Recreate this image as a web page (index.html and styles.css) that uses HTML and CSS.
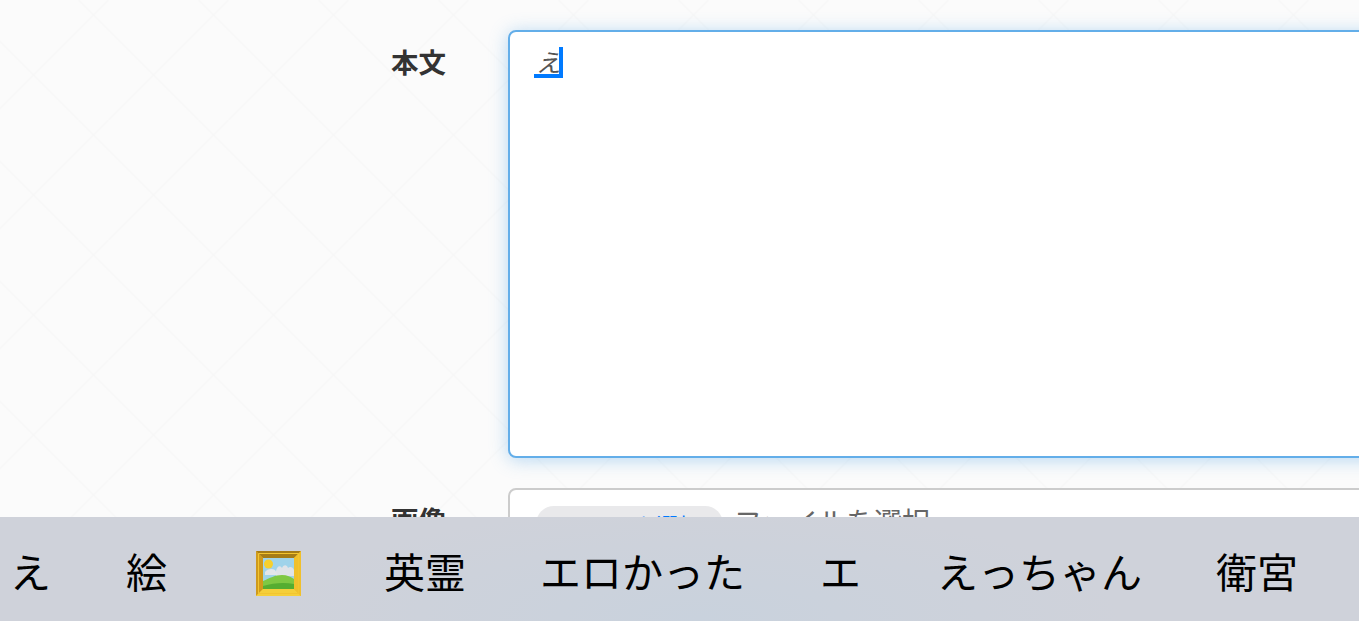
FILE: index.html
```html
<!DOCTYPE html>
<html lang="ja">
<head>
    <meta charset="UTF-8">
    <title>投稿</title>
    <link rel="stylesheet" href="styles.css">
</head>
<body>
    <main class="form">
        <div class="row">
            <label class="label" for="body">本文</label>
            <div class="text-box" id="body">
                <span class="composing">え</span>
            </div>
        </div>
        <div class="row row-file">
            <label class="label">画像</label>
            <div class="file-box">
                <span class="file-button">ファイルを選択</span>
                <span class="file-name">ファイルを選択</span>
            </div>
        </div>
    </main>

    <div class="keyboard">
        <span class="word">え</span>
        <span class="word">絵</span>
        <span class="word word-emoji">
            <svg class="emoji" viewBox="0 0 45 45" width="45" height="45" role="img" aria-label="額縁">
                <rect width="45" height="45" fill="#e3ad20"/>
                <path d="M0 0H45L38 7H7Z" fill="#a67c16"/>
                <path d="M0 0L7 7V38L0 45Z" fill="#cf9a1c"/>
                <path d="M45 0L38 7V38L45 45Z" fill="#f0c02c"/>
                <path d="M0 45L7 38H38L45 45Z" fill="#f5cf3a"/>
                <rect x="7" y="7" width="31" height="31" fill="#9fd3ea"/>
                <path d="M20 20c1-5 4-6 6-3 2-4 5-3 6 0 2-2 5-1 6 2v6H20Z" fill="#dfe3e8"/>
                <path d="M9 21c2-3 7-4 10-2l3 5H9Z" fill="#e3e6ea"/>
                <circle cx="12.500" cy="13" r="4.500" fill="#f7d02c"/>
                <path d="M7 30c7-3 12-6 19-6 5 0 9 2 12 4v10H7Z" fill="#7fc843"/>
                <path d="M7 35c10-3 21-4 31-2v5H7Z" fill="#55ad31"/>
                <path d="M2.500 2.500H42.500V42.500H2.500Z" fill="none" stroke="#f3c530" stroke-width="1"/>
            </svg>
        </span>
        <span class="word word-nudge">英霊</span>
        <span class="word">エロかった</span>
        <span class="word">エ</span>
        <span class="word word-nudge">えっちゃん</span>
        <span class="word">衛宮</span>
    </div>
</body>
</html>
```

FILE: styles.css
```css
html, body {
    height: 100%;
}
body {
    margin: 0;
    display: flex;
    flex-direction: column;
    overflow: hidden;
    font-family: "Noto Sans CJK JP", "Noto Sans", sans-serif;
    color: #333;
    background-color: #fbfbfb;
    /* faint diamond pattern */
    background-image:
        linear-gradient(45deg, transparent calc(50% - 1px), #f6f6f6 50%, transparent calc(50% + 1px)),
        linear-gradient(-45deg, transparent calc(50% - 1px), #f6f6f6 50%, transparent calc(50% + 1px));
    background-size: 120px 120px;
    background-position: -41.5px 0, -11.5px 0;
}
.form {
    flex: 1;
    min-height: 0;
    overflow: hidden;
    padding-top: 30px;
}
.row {
    display: flex;
    width: 1500px;
}
.row-file {
    margin-top: 30px;
}
.label {
    width: 446px;
    margin-right: 62px;
    flex-shrink: 0;
    padding-top: 11px;
    text-align: right;
    font-size: 27.5px;
    font-weight: 700;
    line-height: 40px;
}
.text-box {
    flex: 1;
    box-sizing: border-box;
    height: 428px;
    padding: 15px 24px;
    background-color: #fff;
    border: 2px solid #63aee9;
    border-radius: 8px;
    box-shadow: 0 2px 18px rgba(99, 174, 233, 0.45);
}
.composing {
    display: inline-block;
    box-sizing: border-box;
    width: 29px;
    height: 31px;
    padding-left: 2px;
    border-right: 4px solid #007aff;
    border-bottom: 4px solid #007aff;
    color: #555;
    font-size: 25px;
    font-style: italic;
    line-height: 28px;
}
.file-box {
    flex: 1;
    box-sizing: border-box;
    display: flex;
    gap: 11px;
    height: 120px;
    padding: 16px 26px;
    background-color: #fff;
    border: 2px solid #ccc;
    border-radius: 8px;
}
.file-button {
    box-sizing: border-box;
    width: 187px;
    height: 60px;
    padding: 2px 12px 0 0;
    text-align: center;
    background-color: #e9e9eb;
    border-radius: 18px;
    color: #007aff;
    font-size: 22px;
    line-height: 32px;
}
.file-name {
    color: #666;
    font-size: 28px;
    line-height: 30px;
}
.keyboard {
    flex: 0 0 104px;
    box-sizing: border-box;
    display: flex;
    align-items: center;
    gap: 75px;
    padding: 2px 0 0 10px;
    background-color: #cfd2da;
    background-image: radial-gradient(ellipse 420px 110px at 700px 100px, #c9d2dd, transparent);
    color: #000;
    font-size: 41px;
    font-weight: 400;
    white-space: nowrap;
}
.word {
    line-height: 48px;
    flex-shrink: 0;
}
.word-emoji {
    display: flex;
    justify-content: flex-end;
    box-sizing: border-box;
    width: 66px;
    padding: 7px 7px 0 0;
}
.word-nudge {
    margin: 0 -1px 0 1px;
}
```
